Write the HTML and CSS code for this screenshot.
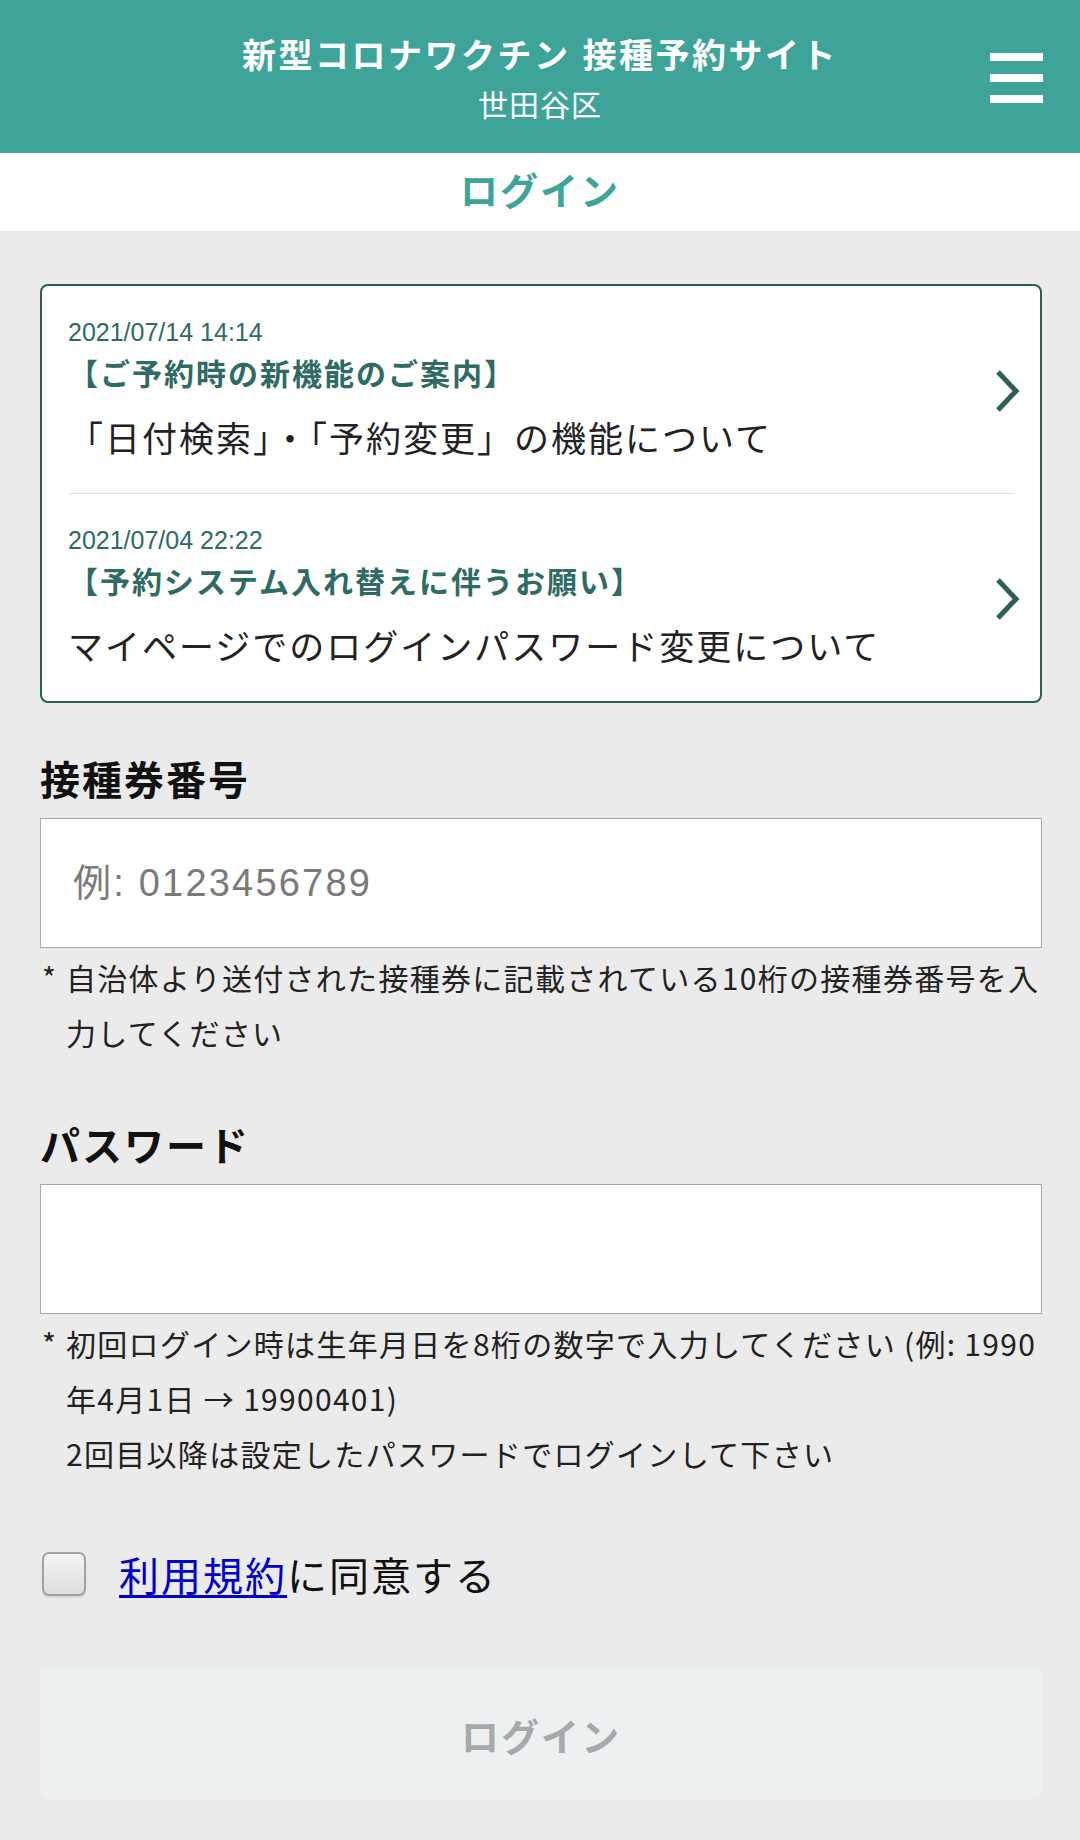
FILE: index.html
```html
<!DOCTYPE html>
<html lang="ja">
<head>
    <meta charset="UTF-8">
    <title>新型コロナワクチン 接種予約サイト - ログイン</title>
    <meta name="viewport" content="width=device-width, initial-scale=1.0">
    <link rel="stylesheet" href="styles.css">
</head>
<body>
    <header class="site_header">
        <div class="site_header__title">
            <h1>新型コロナワクチン 接種予約サイト</h1>
            <p>世田谷区</p>
        </div>
        <button class="menu_btn" type="button" aria-label="メニュー">
            <span></span><span></span><span></span>
        </button>
    </header>
    <div class="page_title">ログイン</div>

    <main class="content">
        <ul class="notice_list">
            <li class="notice">
                <a href="#" class="notice__link">
                    <div class="notice__body">
                        <time class="notice__date">2021/07/14 14:14</time>
                        <p class="notice__title">【ご予約時の新機能のご案内】</p>
                        <p class="notice__text">「日付検索」・「予約変更」の機能について</p>
                    </div>
                    <svg class="notice__arrow" viewBox="0 0 25 42" width="25" height="42">
                        <polyline points="3,2 21,21 3,40" />
                    </svg>
                </a>
            </li>
            <li class="notice">
                <a href="#" class="notice__link">
                    <div class="notice__body">
                        <time class="notice__date">2021/07/04 22:22</time>
                        <p class="notice__title">【予約システム入れ替えに伴うお願い】</p>
                        <p class="notice__text">マイページでのログインパスワード変更について</p>
                    </div>
                    <svg class="notice__arrow" viewBox="0 0 25 42" width="25" height="42">
                        <polyline points="3,2 21,21 3,40" />
                    </svg>
                </a>
            </li>
        </ul>

        <form class="login_form" onsubmit="return false">
            <label class="field_label" for="ticket">接種券番号</label>
            <input class="field_input" id="ticket" type="text" inputmode="numeric" placeholder="例: 0123456789">
            <div class="field_note">
                <span class="field_note__mark">*</span>
                <p>自治体より送付された接種券に記載されている10桁の接種券番号を入力してください</p>
            </div>

            <label class="field_label field_label--password" for="password">パスワード</label>
            <input class="field_input" id="password" type="password">
            <div class="field_note">
                <span class="field_note__mark">*</span>
                <p>初回ログイン時は生年月日を8桁の数字で入力してください (例: 1990年4月1日 → 19900401)<br>2回目以降は設定したパスワードでログインして下さい</p>
            </div>

            <label class="agree">
                <input class="agree__check" type="checkbox">
                <span><a href="#">利用規約</a>に同意する</span>
            </label>

            <button class="submit_btn" type="submit" disabled>ログイン</button>
        </form>
    </main>
</body>
</html>
```

FILE: styles.css
```css
:root {
    --teal: #3ea499;
    --teal-dark: #2c5f59;
    --teal-text: #2e6b63;
    --page-bg: #ebebeb;
    --text: #1e1e1e;
    --border: #a8a8a8;
}
* {
    box-sizing: border-box;
    padding: 0;
    margin: 0;
}
body {
    background: var(--page-bg);
    color: var(--text);
    font-family: "Liberation Sans", "Noto Sans CJK JP", sans-serif;
    width: 1080px;
    min-height: 1840px;
}

/* Header */
.site_header {
    display: grid;
    grid-template-columns: 1fr auto 1fr;
    align-items: center;
    height: 153px;
    background: var(--teal);
    color: #fff;
}
.site_header__title {
    grid-column: 2;
    align-self: start;
    text-align: center;
    padding-top: 34px;
}
.site_header__title h1 {
    font-size: 34px;
    line-height: 44px;
    font-weight: 700;
    letter-spacing: 2.5px;
}
.site_header__title p {
    font-size: 30px;
    line-height: 40px;
    margin-top: 8px;
    letter-spacing: 1px;
}
.menu_btn {
    grid-column: 3;
    justify-self: end;
    margin-right: 37px;
    margin-top: 2px;
    display: flex;
    flex-direction: column;
    gap: 13px;
    background: none;
    border: 0;
    cursor: pointer;
}
.menu_btn span {
    display: block;
    width: 53px;
    height: 8px;
    background: #fff;
}

/* Page title */
.page_title {
    height: 78px;
    line-height: 78px;
    background: #fff;
    text-align: center;
    color: var(--teal);
    font-size: 38px;
    font-weight: 700;
    letter-spacing: 2px;
}

.content {
    padding: 53px 38px 40px 40px;
}

/* Notices */
.notice_list {
    list-style: none;
    background: #fff;
    border: 2px solid var(--teal-dark);
    border-radius: 8px;
}
.notice + .notice .notice__link {
    border-top: 1px solid #e4e4e4;
}
.notice__link {
    display: flex;
    align-items: center;
    margin: 0 26px;
    padding: 28px 0 25px;
    text-decoration: none;
    color: inherit;
}
.notice__body {
    flex: 1;
}
.notice__date {
    display: block;
    font-size: 25px;
    line-height: 36px;
    color: var(--teal-text);
}
.notice__title {
    font-size: 30px;
    line-height: 50px;
    font-weight: 700;
    letter-spacing: 2px;
    color: var(--teal-text);
}
.notice__text {
    margin-top: 12px;
    font-size: 35px;
    line-height: 56px;
    letter-spacing: 2px;
    color: #222;
}
.notice__arrow {
    flex: none;
    margin-right: -6px;
    fill: none;
    stroke: var(--teal-dark);
    stroke-width: 5;
}

/* Form */
.field_label {
    display: block;
    margin-top: 54px;
    font-size: 40px;
    line-height: 48px;
    font-weight: 700;
    letter-spacing: 2px;
    color: #111;
}
.field_label--password {
    margin-top: 63px;
}
.field_input {
    display: block;
    width: 100%;
    height: 130px;
    margin-top: 13px;
    padding: 0 32px;
    background: #fff;
    border: 1px solid var(--border);
    border-radius: 0;
    font-family: "Liberation Sans", "Noto Sans CJK JP", sans-serif;
    font-size: 38px;
    letter-spacing: 2.2px;
    color: #222;
    outline: none;
}
.field_input::placeholder {
    color: #7a7a7a;
}
.field_note {
    display: flex;
    margin-top: 2px;
    font-family: "Noto Sans CJK JP", sans-serif;
    font-size: 30px;
    line-height: 55px;
    letter-spacing: 1.3px;
    color: #222;
}
.field_note__mark {
    flex: none;
    width: 26px;
    padding-left: 2px;
}
.field_note p {
    flex: 1;
}

/* Agree */
.agree {
    display: flex;
    align-items: center;
    gap: 33px;
    margin-top: 65px;
    height: 56px;
    font-size: 40px;
    letter-spacing: 2px;
    color: #111;
}
.agree__check {
    appearance: none;
    -webkit-appearance: none;
    flex: none;
    width: 44px;
    height: 44px;
    margin-left: 2px;
    border: 2px solid #a2a2a2;
    border-radius: 7px;
    background: linear-gradient(#f5f5f5, #dedede);
    box-shadow: 0 2px 1px rgba(0, 0, 0, 0.08);
}
.agree a {
    color: #0000cc;
    text-decoration-thickness: 3px;
    text-underline-offset: 4px;
}

/* Submit */
.submit_btn {
    display: block;
    width: 100%;
    height: 132px;
    margin-top: 66px;
    border: 0;
    border-radius: 10px;
    background: #ecf0f0;
    color: #a4aaa9;
    font-family: "Liberation Sans", "Noto Sans CJK JP", sans-serif;
    font-size: 38px;
    font-weight: 700;
    letter-spacing: 2px;
}
```
